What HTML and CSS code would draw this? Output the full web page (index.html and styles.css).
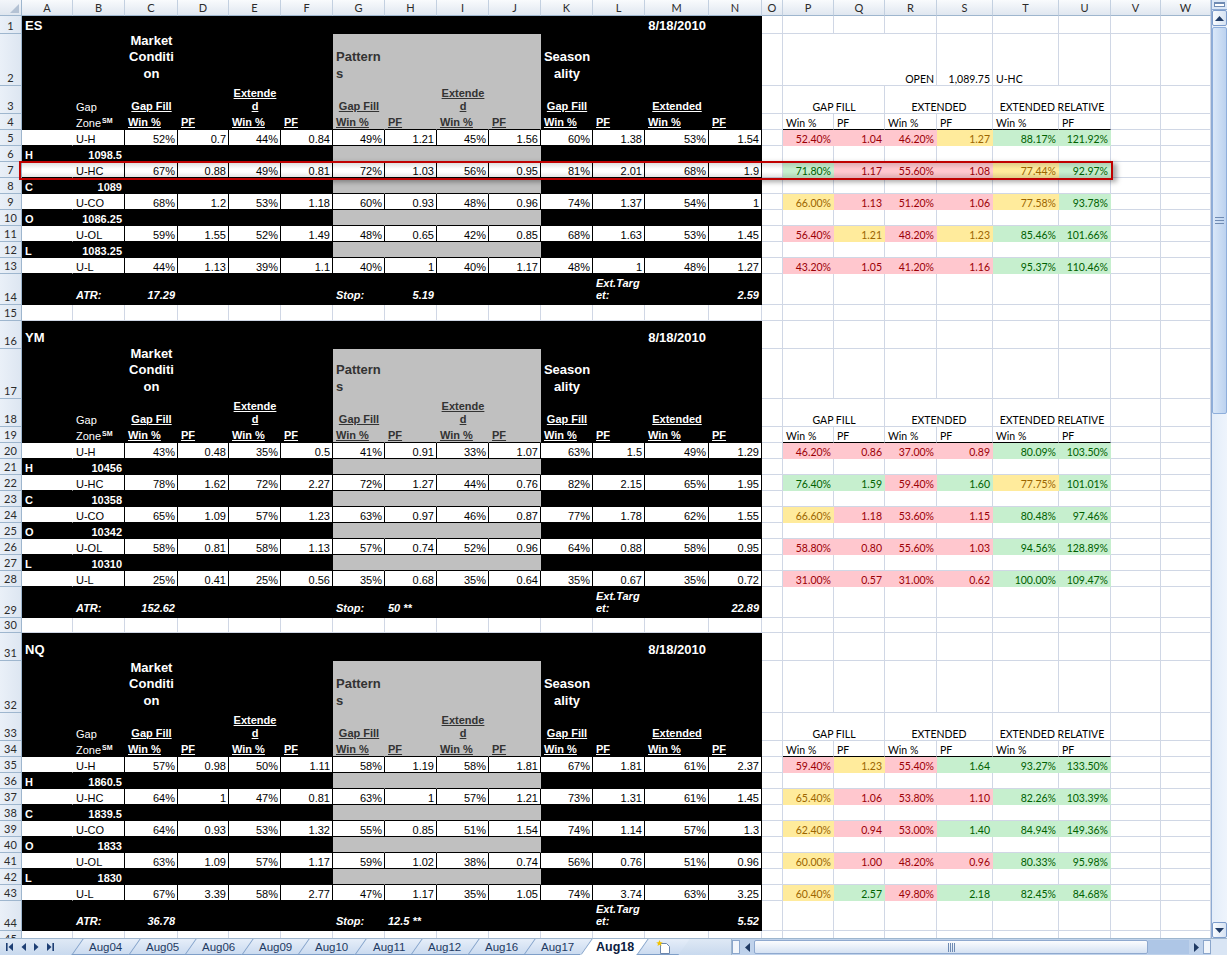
FILE: index.html
```html
<!DOCTYPE html>
<html lang="en">
<head>
<meta charset="utf-8">
<title>Aug18 - Gap Zone</title>
<link rel="stylesheet" href="styles.css">
</head>
<body>
<div class="app">
  <div class="main">
    <div class="sheet" id="sheet"></div>
    <div class="vs">
      <div class="vsp"><i></i></div>
      <div class="vbtn"><svg width="9" height="5" viewBox="0 0 9 5"><path d="M0 5L4.5 0L9 5Z" fill="#1f3a64"/></svg></div>
      <div class="vth"><svg width="9" height="7" viewBox="0 0 9 7"><path d="M0 .5H9M0 3.5H9M0 6.5H9" stroke="#6f8bb3" stroke-width="1"/></svg></div>
      <div class="vtr"></div>
      <div class="vbtn"><svg width="9" height="5" viewBox="0 0 9 5"><path d="M0 0L4.5 5L9 0Z" fill="#1f3a64"/></svg></div>
    </div>
  </div>
  <div class="tabbar">
    <div class="nav">
      <svg width="62" height="16" viewBox="0 0 62 16">
        <g fill="#1e3f74">
          <rect x="6" y="4" width="1.6" height="8"/><path d="M13 4L8.5 8L13 12Z"/>
          <path d="M26 4L21.5 8L26 12Z"/>
          <path d="M34 4L38.5 8L34 12Z"/>
          <path d="M47 4L51.5 8L47 12Z"/><rect x="52.4" y="4" width="1.6" height="8"/>
        </g>
      </svg>
    </div>
    <div class="tabs">
      <div class="tab"><span>Aug04</span></div>
      <div class="tab"><span>Aug05</span></div>
      <div class="tab"><span>Aug06</span></div>
      <div class="tab"><span>Aug09</span></div>
      <div class="tab"><span>Aug10</span></div>
      <div class="tab"><span>Aug11</span></div>
      <div class="tab"><span>Aug12</span></div>
      <div class="tab"><span>Aug16</span></div>
      <div class="tab"><span>Aug17</span></div>
      <div class="tab act"><span>Aug18</span></div>
      <div class="tab nw"><span><svg width="16" height="14" viewBox="0 0 16 14"><path d="M4.5 3.5h6l3 3v7h-9z" fill="#fff" stroke="#6d87ad"/><path d="M3.5 0l1 2.2 2.3.4-1.8 1.1.5 2.3-2-1.3-2 1.3.5-2.3L.2 2.6l2.3-.4z" fill="#f2c200"/></svg></span></div>
    </div>
    <div class="hs">
      <div class="hsp"></div>
      <div class="har"><svg width="5" height="9" viewBox="0 0 5 9"><path d="M5 0L0 4.5L5 9Z" fill="#1f3a64"/></svg></div>
      <div class="hth"><svg width="7" height="9" viewBox="0 0 7 9"><path d="M.5 0V9M2.5 0V9M4.5 0V9M6.5 0V9" stroke="#6f8bb3" stroke-width="1"/></svg></div>
      <div class="htr"></div>
      <div class="har"><svg width="5" height="9" viewBox="0 0 5 9"><path d="M0 0L5 4.5L0 9Z" fill="#1f3a64"/></svg></div>
      <div class="hsp"></div>
    </div>
    <div class="bc"></div>
  </div>
  <div class="hl"></div>
</div>
<script src="script.js"></script>
</body>
</html>
```

FILE: styles.css
```css
*{box-sizing:border-box}
html,body{margin:0;padding:0}
body{width:1227px;height:955px;overflow:hidden;background:#fff;font-family:"Liberation Sans",Arial,sans-serif;color:#000}
.app{position:relative;width:1227px;height:955px}
.main{display:flex;height:938px}
.sheet{display:grid;width:1211px;height:938px;overflow:hidden;align-content:start;
  grid-template-columns:22px 51px 52px 53px 51px 52px 52px 52px 52px 52px 52px 52px 52px 64px 53px 21px 51px 51px 52px 56px 66px 52px 50px 50px;
  grid-template-rows:16px 18px 52px 28px 16px repeat(9,16px) 31px 16px 28px 50px 28px 16px repeat(9,16px) 31px 15px 28px 52px 28px 16px repeat(9,16px) 30px 16px}

.corner{position:relative;background:linear-gradient(#f3f6fa,#dfe6ef);border-right:1px solid #9eb6ce;border-bottom:1px solid #9eb6ce}
.corner::after{content:"";position:absolute;right:2px;bottom:2px;border-style:solid;border-width:0 0 9px 9px;border-color:transparent transparent #b4c2d4 transparent}
.ch{display:flex;align-items:center;justify-content:center;background:linear-gradient(#f9fbfd,#e0e7f0);border-right:1px solid #c3d0e0;border-bottom:1px solid #9eb6ce;font-family:Lato,"Liberation Sans",sans-serif;font-size:11px;color:#2b2b2b}
.rh{display:flex;align-items:flex-end;justify-content:center;background:linear-gradient(to right,#eaf0f8,#dde6f1);border-right:1px solid #9eb6ce;border-bottom:1px solid #9eb6ce;font-family:Lato,"Liberation Sans",sans-serif;font-size:11px;line-height:14px;color:#2b2b2b}

.c{display:flex;align-items:flex-end;justify-content:flex-start;min-width:0;border-right:1px solid #d0d7e5;border-bottom:1px solid #d0d7e5;padding:0 2px 0 3px;font-size:11px;line-height:12px;white-space:nowrap;background:#fff}
.r{justify-content:flex-end}
.ctr{justify-content:center;text-align:center}
.k{background:#000;border-color:#000;color:#fff}
.g{background:#c0c0c0;border-color:#c0c0c0;color:#333}
.bb{border-bottom-color:#000}
.w{background:#fff;border-color:#000;color:#000}
.wa{background:#fff;border-right-color:#fff;border-bottom-color:#000}
.ttl{font-size:13px;font-weight:bold;line-height:15px}
.ttl2{padding-bottom:3px}
.big{font-size:13px;font-weight:bold;line-height:16.5px;padding-bottom:3px}
.hd{font-weight:bold;line-height:13px}
.hd span{text-decoration:underline}
.lb{font-weight:bold}
.at{font-weight:bold;font-style:italic;padding-bottom:3px}
.c sup{font-size:7px;font-weight:bold;line-height:7px;vertical-align:4px;margin-left:1px}

.rt{font-family:Lato,"Liberation Sans",sans-serif;font-size:10.5px}
.hb{border-bottom-color:#000}
.pk{background:#ffc7ce;border-color:#ffc7ce;color:#9c0006}
.gn{background:#c6efce;border-color:#c6efce;color:#006100}
.yl{background:#ffeb9c;border-color:#ffeb9c;color:#9c6500}
.s2{grid-column:span 2}
.s3{grid-column:span 3}

.hl{position:absolute;left:19px;top:161px;width:1094px;height:19px;border:2px solid #c00000;box-shadow:4px 2px 5px rgba(0,0,0,.35);background:linear-gradient(rgba(0,0,0,.13),rgba(0,0,0,0) 40%,rgba(0,0,0,0) 60%,rgba(0,0,0,.13));pointer-events:none}

/* vertical scrollbar */
.vs{width:16px;height:938px;display:flex;flex-direction:column;border-left:1px solid #8fabd3;background:linear-gradient(to right,#e4edf9,#eef4fc)}
.vsp{height:10px;display:flex;align-items:center;justify-content:center;background:#dbe7f6;border-bottom:1px solid #8fabd3}
.vsp i{display:block;width:11px;height:5px;border:1px solid #6f8bb3;border-top-width:2px;background:#fff}
.vbtn{height:16px;display:flex;align-items:center;justify-content:center;border:1px solid #7d9ccb;border-radius:2px;background:linear-gradient(to right,#fafcfe,#d5e2f3)}
.vth{height:387px;margin-top:1px;display:flex;align-items:center;justify-content:center;border:1px solid #8eaedb;border-radius:2px;background:linear-gradient(to right,#d9e7f8,#bcd2ef)}
.vtr{flex:1}

/* bottom tab bar */
.tabbar{display:flex;height:17px;border-top:1px solid #9eb6ce;background:linear-gradient(#dfe9f5,#c8d9ee)}
.nav{width:62px;height:16px;display:flex;align-items:center}
.tabs{width:669px;height:16px;display:flex;padding-left:15px;overflow:hidden}
.tab{flex:none;width:56.5px;height:16px;display:flex;align-items:center;justify-content:center;transform:skewX(-35deg);background:linear-gradient(#e6eef9,#cbdbf0);border-left:1px solid #7f9fc8;border-bottom:1px solid #7f9fc8}
.tab span{display:block;transform:skewX(35deg);font-size:11.5px;line-height:14px;color:#1e3a62}
.tab.act{background:#fff;border-bottom-color:#fff}
.tab.act span{font-weight:bold;font-size:12.5px;color:#0d213f}
.tab.nw{width:42px}
.tab.nw span{display:flex}
.hs{width:480px;height:16px;display:flex;align-items:center;background:#bfd2eb;border-left:1px solid #9eb6ce}
.hsp{width:8px;height:14px;border:1px solid #8ba6cb;background:#f2f6fb}
.har{width:14px;height:14px;display:flex;align-items:center;justify-content:center}
.hth{width:394px;height:14px;display:flex;align-items:center;justify-content:center;border:1px solid #8fa9cf;border-radius:2px;background:linear-gradient(#fbfcfe,#d5e2f3)}
.htr{flex:1;height:14px;background:#aec6e6}
.bc{width:16px;height:16px;background:#d9e5f4}
```

FILE: script.js
```js
(function () {
  var sheet = document.getElementById('sheet');
  var NR = 45, NC = 23, L = 'ABCDEFGHIJKLMNOPQRSTUVW';
  var g = [], r, c;
  for (r = 0; r <= NR; r++) { g[r] = []; for (c = 0; c <= NC; c++) g[r][c] = { k: 'c', t: '', s: 1 }; }
  g[0][0] = { k: 'corner', t: '', s: 1 };
  for (c = 1; c <= NC; c++) g[0][c] = { k: 'ch', t: L[c - 1], s: 1 };
  for (r = 1; r <= NR; r++) g[r][0] = { k: 'rh', t: String(r), s: 1 };
  function put(r, c, k, t, s) { g[r][c] = { k: k, t: t === undefined ? '' : t, s: s || 1 }; }
  var CM = { p: 'pk', g: 'gn', y: 'yl' };

  var S = [
    { b: 1, n: 'ES', atr: '17.29', stop: '5.19', sl: false, ext: '2.59',
      l: [['H', '1098.5'], ['C', '1089'], ['O', '1086.25'], ['L', '1083.25']],
      d: [
        ['U-H', '52%', '0.7', '44%', '0.84', '49%', '1.21', '45%', '1.56', '60%', '1.38', '53%', '1.54'],
        ['U-HC', '67%', '0.88', '49%', '0.81', '72%', '1.03', '56%', '0.95', '81%', '2.01', '68%', '1.9'],
        ['U-CO', '68%', '1.2', '53%', '1.18', '60%', '0.93', '48%', '0.96', '74%', '1.37', '54%', '1'],
        ['U-OL', '59%', '1.55', '52%', '1.49', '48%', '0.65', '42%', '0.85', '68%', '1.63', '53%', '1.45'],
        ['U-L', '44%', '1.13', '39%', '1.1', '40%', '1', '40%', '1.17', '48%', '1', '48%', '1.27']],
      rt: [
        '52.40%p 1.04p 46.20%p 1.27y 88.17%g 121.92%g',
        '71.80%g 1.17p 55.60%p 1.08p 77.44%y 92.97%g',
        '66.00%y 1.13p 51.20%p 1.06p 77.58%y 93.78%g',
        '56.40%p 1.21y 48.20%p 1.23y 85.46%g 101.66%g',
        '43.20%p 1.05p 41.20%p 1.16p 95.37%g 110.46%g'] },
    { b: 16, n: 'YM', atr: '152.62', stop: '50 **', sl: true, ext: '22.89',
      l: [['H', '10456'], ['C', '10358'], ['O', '10342'], ['L', '10310']],
      d: [
        ['U-H', '43%', '0.48', '35%', '0.5', '41%', '0.91', '33%', '1.07', '63%', '1.5', '49%', '1.29'],
        ['U-HC', '78%', '1.62', '72%', '2.27', '72%', '1.27', '44%', '0.76', '82%', '2.15', '65%', '1.95'],
        ['U-CO', '65%', '1.09', '57%', '1.23', '63%', '0.97', '46%', '0.87', '77%', '1.78', '62%', '1.55'],
        ['U-OL', '58%', '0.81', '58%', '1.13', '57%', '0.74', '52%', '0.96', '64%', '0.88', '58%', '0.95'],
        ['U-L', '25%', '0.41', '25%', '0.56', '35%', '0.68', '35%', '0.64', '35%', '0.67', '35%', '0.72']],
      rt: [
        '46.20%p 0.86p 37.00%p 0.89p 80.09%g 103.50%g',
        '76.40%g 1.59g 59.40%p 1.60g 77.75%y 101.01%g',
        '66.60%y 1.18p 53.60%p 1.15p 80.48%g 97.46%g',
        '58.80%p 0.80p 55.60%p 1.03p 94.56%g 128.89%g',
        '31.00%p 0.57p 31.00%p 0.62p 100.00%g 109.47%g'] },
    { b: 31, n: 'NQ', atr: '36.78', stop: '12.5 **', sl: true, ext: '5.52',
      l: [['H', '1860.5'], ['C', '1839.5'], ['O', '1833'], ['L', '1830']],
      d: [
        ['U-H', '57%', '0.98', '50%', '1.11', '58%', '1.19', '58%', '1.81', '67%', '1.81', '61%', '2.37'],
        ['U-HC', '64%', '1', '47%', '0.81', '63%', '1', '57%', '1.21', '73%', '1.31', '61%', '1.45'],
        ['U-CO', '64%', '0.93', '53%', '1.32', '55%', '0.85', '51%', '1.54', '74%', '1.14', '57%', '1.3'],
        ['U-OL', '63%', '1.09', '57%', '1.17', '59%', '1.02', '38%', '0.74', '56%', '0.76', '51%', '0.96'],
        ['U-L', '67%', '3.39', '58%', '2.77', '47%', '1.17', '35%', '1.05', '74%', '3.74', '63%', '3.25']],
      rt: [
        '59.40%p 1.23y 55.40%p 1.64g 93.27%g 133.50%g',
        '65.40%y 1.06p 53.80%p 1.10p 82.26%g 103.39%g',
        '62.40%y 0.94p 53.00%p 1.40g 84.94%g 149.36%g',
        '60.00%y 1.00p 48.20%p 0.96p 80.33%g 95.98%g',
        '60.40%y 2.57g 49.80%p 2.18g 82.45%g 84.68%g'] }
  ];

  S.forEach(function (s) {
    var b = s.b, r, c, i;
    for (r = b; r <= b + 13; r++) for (c = 1; c <= 14; c++) put(r, c, 'c k');
    for (r = b + 1; r <= b + 12; r++) for (c = 7; c <= 10; c++) put(r, c, 'c g');
    var tp = b > 1 ? ' ttl2' : '';
    put(b, 1, 'c k ttl' + tp, s.n);
    put(b, 13, 'c k ttl r' + tp, '8/18/2010');
    put(b + 1, 3, 'c k big ctr', 'Market<br>Conditi<br>on');
    put(b + 1, 7, 'c g big', 'Pattern<br>s');
    put(b + 1, 11, 'c k big ctr', 'Season<br>ality');
    put(b + 2, 2, 'c k', 'Gap');
    put(b + 2, 3, 'c k hd ctr', 'Gap Fill');
    put(b + 2, 5, 'c k hd ctr', 'Extende<br>d');
    put(b + 2, 7, 'c g hd ctr', 'Gap Fill');
    put(b + 2, 9, 'c g hd ctr', 'Extende<br>d');
    put(b + 2, 11, 'c k hd ctr', 'Gap Fill');
    put(b + 2, 13, 'c k hd ctr', 'Extended');
    put(b + 3, 2, 'c k', 'Zone<sup>SM</sup>');
    for (c = 3; c <= 14; c++) {
      var grey = c >= 7 && c <= 10;
      put(b + 3, c, 'c ' + (grey ? 'g bb' : 'k') + ' hd', c % 2 ? 'Win %' : 'PF');
    }
    for (i = 0; i < 5; i++) {
      r = b + 4 + 2 * i;
      var d = s.d[i];
      put(r, 1, 'c wa');
      put(r, 2, 'c w', d[0]);
      for (c = 3; c <= 14; c++) put(r, c, 'c w r', d[c - 2]);
      var rr = s.rt[i].split(' ');
      for (c = 0; c < 6; c++) {
        var v = rr[c];
        put(r, 16 + c, 'c rt r ' + CM[v.slice(-1)], v.slice(0, -1));
      }
    }
    for (i = 0; i < 4; i++) {
      r = b + 5 + 2 * i;
      put(r, 1, 'c k lb', s.l[i][0]);
      put(r, 2, 'c k lb r', s.l[i][1]);
      for (c = 7; c <= 10; c++) put(r, c, 'c g bb');
    }
    r = b + 13;
    put(r, 2, 'c k at', 'ATR:');
    put(r, 3, 'c k at r', s.atr);
    put(r, 7, 'c k at', 'Stop:');
    put(r, 8, 'c k at' + (s.sl ? '' : ' r'), s.stop);
    put(r, 12, 'c k at', 'Ext.Targ<br>et:');
    put(r, 14, 'c k at r', s.ext);
    put(b + 2, 16, 'c rt ctr s2', 'GAP FILL', 2);
    put(b + 2, 18, 'c rt ctr s2', 'EXTENDED', 2);
    put(b + 2, 20, 'c rt ctr s2', 'EXTENDED RELATIVE', 2);
    var hh = ['Win %', 'PF', 'Win %', 'PF', 'Win %', 'PF'];
    for (c = 0; c < 6; c++) put(b + 3, 16 + c, 'c rt hb', hh[c]);
  });
  put(2, 16, 'c rt r s3', 'OPEN', 3);
  put(2, 19, 'c rt r', '1,089.75');
  put(2, 20, 'c rt', 'U-HC');

  var h = [];
  for (r = 0; r <= NR; r++) {
    var skip = 0;
    for (c = 0; c <= NC; c++) {
      if (skip > 0) { skip--; continue; }
      var x = g[r][c];
      h.push('<div class="' + x.k + '"><span>' + x.t + '</span></div>');
      if (x.s > 1) skip = x.s - 1;
    }
  }
  sheet.innerHTML = h.join('');
})();
```
